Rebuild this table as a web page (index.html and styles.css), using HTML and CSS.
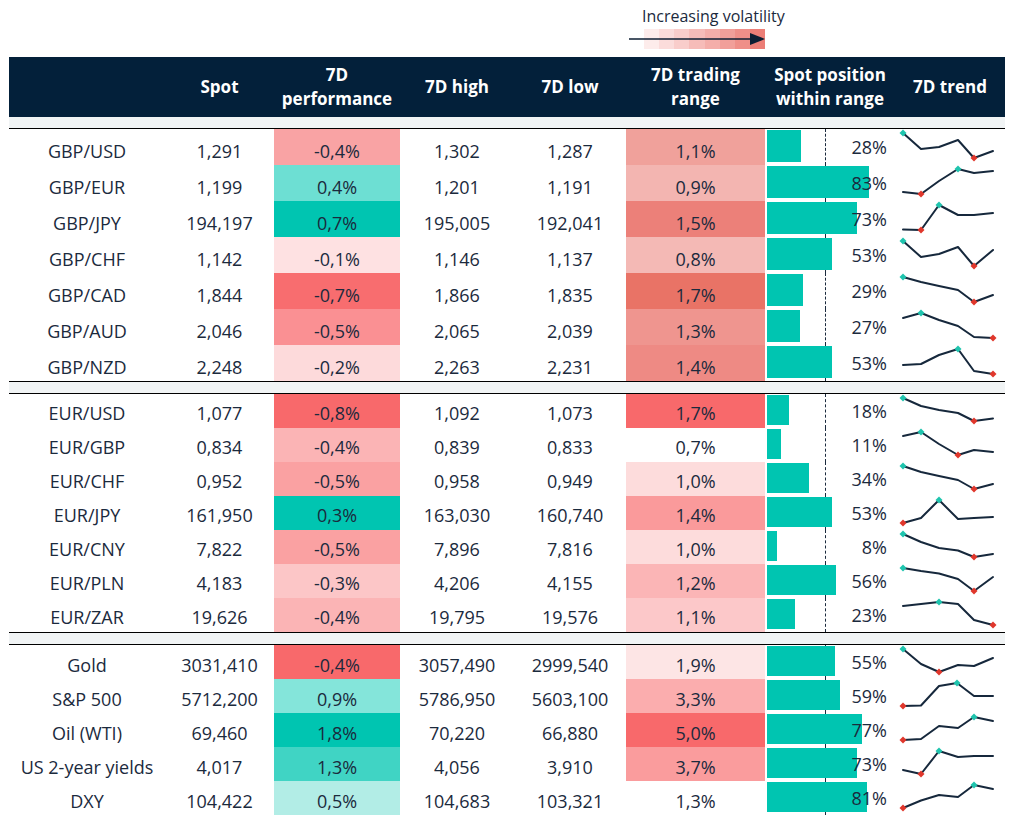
FILE: index.html
```html
<!DOCTYPE html>
<html lang="en">
<head>
<meta charset="utf-8">
<title>FX volatility table</title>
<link rel="stylesheet" href="styles.css">
</head>
<body>
<div class="legend">
  <div class="legend-text">Increasing volatility</div>
  <div class="legend-scale">
    <div class="steps">
      <span class="s1"></span><span class="s2"></span><span class="s3"></span><span class="s4"></span>
      <span class="s5"></span><span class="s6"></span><span class="s7"></span><span class="s8"></span>
    </div>
    <svg class="legend-arrow" width="140" height="16" viewBox="0 0 140 16">
      <line x1="0" y1="8" x2="124" y2="8" stroke="#0d1e33" stroke-width="1.6"/>
      <polygon points="121,2 136,8 121,14" fill="#0d1e33"/>
    </svg>
  </div>
</div>

<div class="table">
  <div class="row head">
    <div class="c"></div>
    <div class="c">Spot</div>
    <div class="c">7D<br>performance</div>
    <div class="c">7D high</div>
    <div class="c">7D low</div>
    <div class="c">7D trading<br>range</div>
    <div class="c">Spot position<br>within range</div>
    <div class="c">7D trend</div>
  </div>
  <div class="sep first"></div>

  <div class="group g1">
    <div class="row">
      <div class="c">GBP/USD</div><div class="c">1,291</div>
      <div class="c" style="background:#f9a3a4">-0,4%</div>
      <div class="c">1,302</div><div class="c">1,287</div>
      <div class="c" style="background:#f0a19b">1,1%</div>
      <div class="pos"><div class="bar" style="width:28%"></div><span class="pct">28%</span></div>
      <div class="trend"><svg viewBox="0 0 96 36" width="96" height="36"><polyline points="3,4 21,20 39,18 58,11 74,29 93,22"/><polygon class="hi" points="3,0.5 6.5,4 3,7.5 -0.5,4"/><polygon class="lo" points="74,25.5 77.5,29 74,32.5 70.5,29"/></svg></div>
    </div>
    <div class="row">
      <div class="c">GBP/EUR</div><div class="c">1,199</div>
      <div class="c" style="background:#6ddfd3">0,4%</div>
      <div class="c">1,201</div><div class="c">1,191</div>
      <div class="c" style="background:#f3b5b1">0,9%</div>
      <div class="pos"><div class="bar" style="width:83%"></div><span class="pct">83%</span></div>
      <div class="trend"><svg viewBox="0 0 96 36" width="96" height="36"><polyline points="3,27 21,29 39,16 58,4 74,8 93,6"/><polygon class="hi" points="58,0.5 61.5,4 58,7.5 54.5,4"/><polygon class="lo" points="21,25.5 24.5,29 21,32.5 17.5,29"/></svg></div>
    </div>
    <div class="row">
      <div class="c">GBP/JPY</div><div class="c">194,197</div>
      <div class="c" style="background:#00c5b1">0,7%</div>
      <div class="c">195,005</div><div class="c">192,041</div>
      <div class="c" style="background:#ec8079">1,5%</div>
      <div class="pos"><div class="bar" style="width:73%"></div><span class="pct">73%</span></div>
      <div class="trend"><svg viewBox="0 0 96 36" width="96" height="36"><polyline points="3,28.5 21,29 39,4 58,14 74,14 93,12"/><polygon class="hi" points="39,0.5 42.5,4 39,7.5 35.5,4"/><polygon class="lo" points="21,25.5 24.5,29 21,32.5 17.5,29"/></svg></div>
    </div>
    <div class="row">
      <div class="c">GBP/CHF</div><div class="c">1,142</div>
      <div class="c" style="background:#fee1e2">-0,1%</div>
      <div class="c">1,146</div><div class="c">1,137</div>
      <div class="c" style="background:#f4b9b5">0,8%</div>
      <div class="pos"><div class="bar" style="width:53%"></div><span class="pct">53%</span></div>
      <div class="trend"><svg viewBox="0 0 96 36" width="96" height="36"><polyline points="3,4 21,20 39,17 58,10 74,29 93,13"/><polygon class="hi" points="3,0.5 6.5,4 3,7.5 -0.5,4"/><polygon class="lo" points="74,25.5 77.5,29 74,32.5 70.5,29"/></svg></div>
    </div>
    <div class="row">
      <div class="c">GBP/CAD</div><div class="c">1,844</div>
      <div class="c" style="background:#f86d6f">-0,7%</div>
      <div class="c">1,866</div><div class="c">1,835</div>
      <div class="c" style="background:#e97366">1,7%</div>
      <div class="pos"><div class="bar" style="width:29%"></div><span class="pct">29%</span></div>
      <div class="trend"><svg viewBox="0 0 96 36" width="96" height="36"><polyline points="3,4 21,9 39,13 58,17 74,29 93,22"/><polygon class="hi" points="3,0.5 6.5,4 3,7.5 -0.5,4"/><polygon class="lo" points="74,25.5 77.5,29 74,32.5 70.5,29"/></svg></div>
    </div>
    <div class="row">
      <div class="c">GBP/AUD</div><div class="c">2,046</div>
      <div class="c" style="background:#fa9093">-0,5%</div>
      <div class="c">2,065</div><div class="c">2,039</div>
      <div class="c" style="background:#ef958f">1,3%</div>
      <div class="pos"><div class="bar" style="width:27%"></div><span class="pct">27%</span></div>
      <div class="trend"><svg viewBox="0 0 96 36" width="96" height="36"><polyline points="3,9 21,4 39,11 58,17 74,28 93,29"/><polygon class="hi" points="21,0.5 24.5,4 21,7.5 17.5,4"/><polygon class="lo" points="93,25.5 96.5,29 93,32.5 89.5,29"/></svg></div>
    </div>
    <div class="row">
      <div class="c">GBP/NZD</div><div class="c">2,248</div>
      <div class="c" style="background:#fddadb">-0,2%</div>
      <div class="c">2,263</div><div class="c">2,231</div>
      <div class="c" style="background:#ee8a84">1,4%</div>
      <div class="pos"><div class="bar" style="width:53%"></div><span class="pct">53%</span></div>
      <div class="trend"><svg viewBox="0 0 96 36" width="96" height="36"><polyline points="3,20 21,19 39,10 58,4 74,26 93,29"/><polygon class="hi" points="58,0.5 61.5,4 58,7.5 54.5,4"/><polygon class="lo" points="93,25.5 96.5,29 93,32.5 89.5,29"/></svg></div>
    </div>
  </div>

  <div class="sep"></div>

  <div class="group g2">
    <div class="row">
      <div class="c">EUR/USD</div><div class="c">1,077</div>
      <div class="c" style="background:#f8696b">-0,8%</div>
      <div class="c">1,092</div><div class="c">1,073</div>
      <div class="c" style="background:#f8696b">1,7%</div>
      <div class="pos"><div class="bar" style="width:18%"></div><span class="pct">18%</span></div>
      <div class="trend"><svg viewBox="0 0 96 34" width="96" height="34"><polyline points="3,4 21,12 39,16 58,19 74,27 93,24.5"/><polygon class="hi" points="3,0.5 6.5,4 3,7.5 -0.5,4"/><polygon class="lo" points="74,23.5 77.5,27 74,30.5 70.5,27"/></svg></div>
    </div>
    <div class="row">
      <div class="c">EUR/GBP</div><div class="c">0,834</div>
      <div class="c" style="background:#fbb4b5">-0,4%</div>
      <div class="c">0,839</div><div class="c">0,833</div>
      <div class="c">0,7%</div>
      <div class="pos"><div class="bar" style="width:11%"></div><span class="pct">11%</span></div>
      <div class="trend"><svg viewBox="0 0 96 34" width="96" height="34"><polyline points="3,8 21,4 39,16 58,27 74,22 93,24"/><polygon class="hi" points="21,0.5 24.5,4 21,7.5 17.5,4"/><polygon class="lo" points="58,23.5 61.5,27 58,30.5 54.5,27"/></svg></div>
    </div>
    <div class="row">
      <div class="c">EUR/CHF</div><div class="c">0,952</div>
      <div class="c" style="background:#faa1a2">-0,5%</div>
      <div class="c">0,958</div><div class="c">0,949</div>
      <div class="c" style="background:#fddcdc">1,0%</div>
      <div class="pos"><div class="bar" style="width:34%"></div><span class="pct">34%</span></div>
      <div class="trend"><svg viewBox="0 0 96 34" width="96" height="34"><polyline points="3,4 21,10 39,14 58,18 74,27 93,22"/><polygon class="hi" points="3,0.5 6.5,4 3,7.5 -0.5,4"/><polygon class="lo" points="74,23.5 77.5,27 74,30.5 70.5,27"/></svg></div>
    </div>
    <div class="row">
      <div class="c">EUR/JPY</div><div class="c">161,950</div>
      <div class="c" style="background:#00c5b1">0,3%</div>
      <div class="c">163,030</div><div class="c">160,740</div>
      <div class="c" style="background:#fa9a9b">1,4%</div>
      <div class="pos"><div class="bar" style="width:53%"></div><span class="pct">53%</span></div>
      <div class="trend"><svg viewBox="0 0 96 34" width="96" height="34"><polyline points="3,27 21,22 39,4 58,23 74,22 93,21"/><polygon class="hi" points="39,0.5 42.5,4 39,7.5 35.5,4"/><polygon class="lo" points="3,23.5 6.5,27 3,30.5 -0.5,27"/></svg></div>
    </div>
    <div class="row">
      <div class="c">EUR/CNY</div><div class="c">7,822</div>
      <div class="c" style="background:#faa1a2">-0,5%</div>
      <div class="c">7,896</div><div class="c">7,816</div>
      <div class="c" style="background:#fddcdc">1,0%</div>
      <div class="pos"><div class="bar" style="width:8%"></div><span class="pct">8%</span></div>
      <div class="trend"><svg viewBox="0 0 96 34" width="96" height="34"><polyline points="3,4 21,12 39,18 58,20.5 74,27 93,24"/><polygon class="hi" points="3,0.5 6.5,4 3,7.5 -0.5,4"/><polygon class="lo" points="74,23.5 77.5,27 74,30.5 70.5,27"/></svg></div>
    </div>
    <div class="row">
      <div class="c">EUR/PLN</div><div class="c">4,183</div>
      <div class="c" style="background:#fcc6c7">-0,3%</div>
      <div class="c">4,206</div><div class="c">4,155</div>
      <div class="c" style="background:#fbb5b6">1,2%</div>
      <div class="pos"><div class="bar" style="width:56%"></div><span class="pct">56%</span></div>
      <div class="trend"><svg viewBox="0 0 96 34" width="96" height="34"><polyline points="3,4 21,7 39,9.5 58,15 74,27 93,13"/><polygon class="hi" points="3,0.5 6.5,4 3,7.5 -0.5,4"/><polygon class="lo" points="74,23.5 77.5,27 74,30.5 70.5,27"/></svg></div>
    </div>
    <div class="row">
      <div class="c">EUR/ZAR</div><div class="c">19,626</div>
      <div class="c" style="background:#fbb4b5">-0,4%</div>
      <div class="c">19,795</div><div class="c">19,576</div>
      <div class="c" style="background:#fcc8c9">1,1%</div>
      <div class="pos"><div class="bar" style="width:23%"></div><span class="pct">23%</span></div>
      <div class="trend"><svg viewBox="0 0 96 34" width="96" height="34"><polyline points="3,8 21,6 39,4 58,6 74,22 93,27"/><polygon class="hi" points="39,0.5 42.5,4 39,7.5 35.5,4"/><polygon class="lo" points="93,23.5 96.5,27 93,30.5 89.5,27"/></svg></div>
    </div>
  </div>

  <div class="sep"></div>

  <div class="group g3">
    <div class="row">
      <div class="c">Gold</div><div class="c">3031,410</div>
      <div class="c" style="background:#f8696b">-0,4%</div>
      <div class="c">3057,490</div><div class="c">2999,540</div>
      <div class="c" style="background:#fde5e5">1,9%</div>
      <div class="pos"><div class="bar" style="width:55%"></div><span class="pct">55%</span></div>
      <div class="trend"><svg viewBox="0 0 96 34" width="96" height="34"><polyline points="3,4 21,19 39,27 58,20 74,21 93,13"/><polygon class="hi" points="3,0.5 6.5,4 3,7.5 -0.5,4"/><polygon class="lo" points="39,23.5 42.5,27 39,30.5 35.5,27"/></svg></div>
    </div>
    <div class="row">
      <div class="c">S&amp;P 500</div><div class="c">5712,200</div>
      <div class="c" style="background:#84e5da">0,9%</div>
      <div class="c">5786,950</div><div class="c">5603,100</div>
      <div class="c" style="background:#fbadae">3,3%</div>
      <div class="pos"><div class="bar" style="width:59%"></div><span class="pct">59%</span></div>
      <div class="trend"><svg viewBox="0 0 96 34" width="96" height="34"><polyline points="3,27 21,26.5 39,7 57,4 74,17 93,17"/><polygon class="hi" points="57,0.5 60.5,4 57,7.5 53.5,4"/><polygon class="lo" points="3,23.5 6.5,27 3,30.5 -0.5,27"/></svg></div>
    </div>
    <div class="row">
      <div class="c">Oil (WTI)</div><div class="c">69,460</div>
      <div class="c" style="background:#00c5b1">1,8%</div>
      <div class="c">70,220</div><div class="c">66,880</div>
      <div class="c" style="background:#f8696b">5,0%</div>
      <div class="pos"><div class="bar" style="width:77%"></div><span class="pct">77%</span></div>
      <div class="trend"><svg viewBox="0 0 96 34" width="96" height="34"><polyline points="3,27 21,26 39,13 58,15 74,4 93,8"/><polygon class="hi" points="74,0.5 77.5,4 74,7.5 70.5,4"/><polygon class="lo" points="3,23.5 6.5,27 3,30.5 -0.5,27"/></svg></div>
    </div>
    <div class="row">
      <div class="c">US 2-year yields</div><div class="c">4,017</div>
      <div class="c" style="background:#40d4c4">1,3%</div>
      <div class="c">4,056</div><div class="c">3,910</div>
      <div class="c" style="background:#fa9c9d">3,7%</div>
      <div class="pos"><div class="bar" style="width:73%"></div><span class="pct">73%</span></div>
      <div class="trend"><svg viewBox="0 0 96 34" width="96" height="34"><polyline points="3,23 21,27 39,4 58,10 74,9 93,9"/><polygon class="hi" points="39,0.5 42.5,4 39,7.5 35.5,4"/><polygon class="lo" points="21,23.5 24.5,27 21,30.5 17.5,27"/></svg></div>
    </div>
    <div class="row">
      <div class="c">DXY</div><div class="c">104,422</div>
      <div class="c" style="background:#b2ede6">0,5%</div>
      <div class="c">104,683</div><div class="c">103,321</div>
      <div class="c">1,3%</div>
      <div class="pos"><div class="bar" style="width:81%"></div><span class="pct">81%</span></div>
      <div class="trend"><svg viewBox="0 0 96 34" width="96" height="34"><polyline points="3,27 21,19.5 39,14 58,16 74,4 93,8"/><polygon class="hi" points="74,0.5 77.5,4 74,7.5 70.5,4"/><polygon class="lo" points="3,23.5 6.5,27 3,30.5 -0.5,27"/></svg></div>
    </div>
  </div>
</div>
</body>
</html>
```
FILE: styles.css
```css
* { box-sizing: border-box; }

body {
  margin: 0;
  padding: 0 10px 0 9px;
  background: #ffffff;
  font-family: "Open Sans", "Noto Sans", "Liberation Sans", sans-serif;
  color: #1b2a3d;
}

/* legend */
.legend {
  margin-left: 620px;
  width: 190px;
  height: 57px;
  padding-top: 5px;
}
.legend-text {
  margin-left: 13px;
  font-size: 16px;
  line-height: 22px;
  color: #1b2a3d;
}
.legend-scale {
  display: grid;
  margin-top: 2px;
  width: 140px;
  height: 20px;
}
.legend-scale > * { grid-area: 1 / 1; }
.steps {
  display: flex;
  margin-left: 15px;
  width: 121px;
  height: 20px;
}
.steps span { flex: 1; }
.s1 { background: #fdeceb; }
.s2 { background: #fbdcdb; }
.s3 { background: #f9cdcb; }
.s4 { background: #f6bcb9; }
.s5 { background: #f4aeaa; }
.s6 { background: #f19f9a; }
.s7 { background: #ef8f89; }
.s8 { background: #ec7e77; }
.legend-arrow { align-self: center; }

/* table */
.table { width: 996px; }

.row {
  display: grid;
  grid-template-columns: 156px 109px 126px 114px 112px 139px 130px 110px;
  font-size: 18px;
}
.c {
  display: flex;
  align-items: center;
  justify-content: center;
  text-align: center;
  white-space: nowrap;
}

.head {
  height: 60px;
  background: #03203a;
  color: #ffffff;
  font-weight: 700;
  font-size: 17px;
  line-height: 24px;
}

.sep {
  height: 13px;
  background: #f1f4f5;
  border-top: 1px solid #000;
  border-bottom: 1px solid #000;
}
.sep.first {
  height: 12px;
  border-top: none;
}

.g1 .row { height: 36px; }
.g2 .row, .g3 .row { height: 34px; }

.g1 .c { padding-top: 8px; }
.g2 .c { padding-top: 4px; }
.g3 .c { padding-top: 6px; }

/* spot position bars */
.pos {
  position: relative;
  display: grid;
  grid-template-columns: 123px;
  justify-content: start;
  align-items: stretch;
  padding: 1px 0 3px 2px;
}
.pos::before {
  content: "";
  position: absolute;
  left: 60px;
  top: 0;
  bottom: 0;
  border-left: 1px dashed #1b2a3d;
}
.pos > * { grid-area: 1 / 1; }
.bar {
  position: relative;
  background: #00c5b1;
}
.pct {
  position: relative;
  justify-self: end;
  align-self: center;
  padding-right: 3px;
  padding-top: 2px;
}

/* sparklines */
.trend {
  display: flex;
  padding-left: 5px;
}
.trend svg { overflow: visible; }
.trend polyline {
  fill: none;
  stroke: #16283c;
  stroke-width: 2;
  stroke-linejoin: round;
  stroke-linecap: round;
}
.trend .hi { fill: #1fc4ae; }
.trend .lo { fill: #e0372c; }
```
